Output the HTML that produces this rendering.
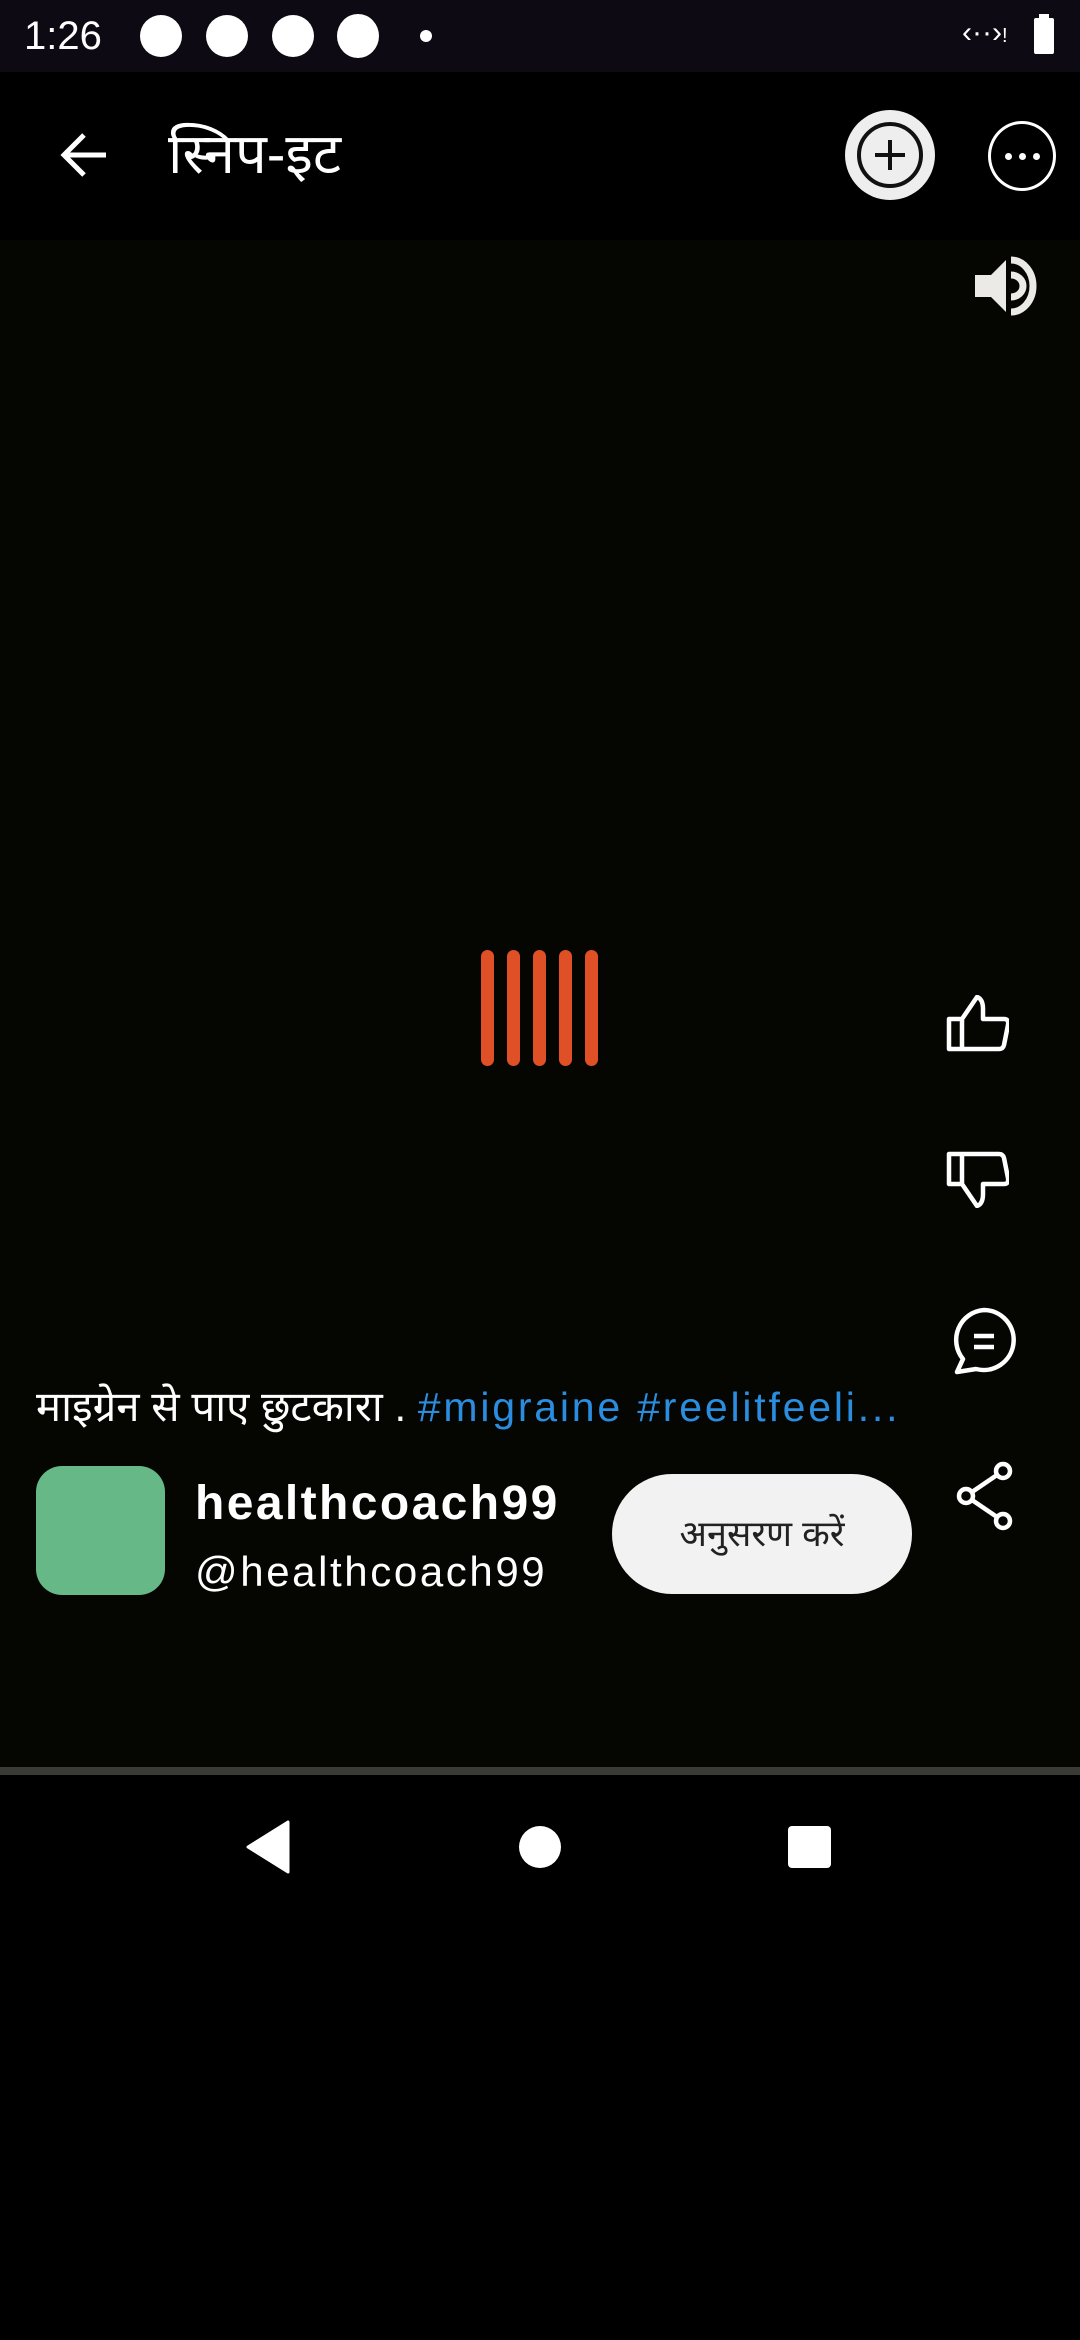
<!DOCTYPE html>
<html><head><meta charset="utf-8"><style>
*{margin:0;padding:0;box-sizing:border-box}
html,body{width:1080px;height:2340px;background:#000;overflow:hidden;font-family:"Liberation Sans","Noto Sans CJK SC",sans-serif;color:#fff;position:relative}
.abs{position:absolute}
</style></head><body>
<div class="abs" style="left:0;top:0;width:1080px;height:72px;background:#0d0a14"></div>
<div class="abs" style="left:24px;top:10px;font-size:40px;line-height:52px;color:#fff">1:26</div>
<div class="abs" style="left:140px;top:15px;width:42px;height:42px;border-radius:50%;background:#fff"></div>
<div class="abs" style="left:206px;top:15px;width:42px;height:42px;border-radius:50%;background:#fff"></div>
<div class="abs" style="left:272px;top:15px;width:42px;height:42px;border-radius:50%;background:#fff"></div>
<div class="abs" style="left:337px;top:14px;width:42px;height:44px;border-radius:50%;background:#fff"></div>
<div class="abs" style="left:420px;top:30px;width:12px;height:12px;border-radius:50%;background:#fff"></div>
<div class="abs" style="left:962px;top:16px;font-size:30px;color:#fff">‹··›<span style="font-size:20px">!</span></div>
<div class="abs" style="left:1034px;top:18px;width:20px;height:36px;background:#fff;border-radius:2px"></div>
<div class="abs" style="left:1039px;top:14px;width:10px;height:5px;background:#fff"></div>

<!-- app bar -->
<svg class="abs" style="left:56px;top:130px" width="56" height="50" viewBox="0 0 56 50"><path d="M50 25H8M28 5L8 25l20 20" stroke="#fff" stroke-width="5" fill="none"/></svg>
<div class="abs" style="left:168px;top:118px;font-size:56px;line-height:72px;font-family:'Liberation Sans','Noto Sans CJK SC','DejaVu Sans',sans-serif">स्निप-इट</div>
<div class="abs" style="left:845px;top:110px;width:90px;height:90px;border-radius:50%;background:#eee"></div>
<div class="abs" style="left:857px;top:122px;width:66px;height:66px;border-radius:50%;border:4px solid #111"></div>
<div class="abs" style="left:888px;top:140px;width:4px;height:30px;background:#111"></div>
<div class="abs" style="left:875px;top:153px;width:30px;height:4px;background:#111"></div>
<div class="abs" style="left:988px;top:121px;width:68px;height:70px;border-radius:50%;border:3px solid #fff"></div>
<div class="abs" style="left:1005px;top:153px;width:7px;height:7px;border-radius:50%;background:#fff"></div>
<div class="abs" style="left:1019px;top:153px;width:7px;height:7px;border-radius:50%;background:#fff"></div>
<div class="abs" style="left:1033px;top:153px;width:7px;height:7px;border-radius:50%;background:#fff"></div>

<!-- content -->
<div class="abs" style="left:0;top:240px;width:1080px;height:1528px;background:#050502"></div>
<svg class="abs" style="left:975px;top:255px" width="64" height="62" viewBox="0 0 64 62"><path d="M0 20h16L31 5v52L16 42H0z" fill="#eceae6"/><path d="M36 20a12 11 0 0 1 0 22" stroke="#eceae6" stroke-width="7" fill="none"/><path d="M36 5a22 26 0 0 1 0 52" stroke="#eceae6" stroke-width="7" fill="none"/></svg>

<div class="abs" style="left:481px;top:950px;width:13px;height:116px;border-radius:7px;background:#e05027"></div>
<div class="abs" style="left:507px;top:950px;width:13px;height:116px;border-radius:7px;background:#e05027"></div>
<div class="abs" style="left:533px;top:950px;width:13px;height:116px;border-radius:7px;background:#e05027"></div>
<div class="abs" style="left:559px;top:950px;width:13px;height:116px;border-radius:7px;background:#e05027"></div>
<div class="abs" style="left:585px;top:950px;width:13px;height:116px;border-radius:7px;background:#e05027"></div>

<svg class="abs" style="left:945px;top:995px" width="64" height="58" viewBox="0 0 64 58"><path d="M4 24h13v30H4zM17 54h37q4 0 5-4l4-20q1-6-4-6H38V14q0-10-6-12L17 24z" stroke="#fff" stroke-width="4.5" fill="none" stroke-linejoin="round"/></svg>
<svg class="abs" style="left:945px;top:1150px" width="64" height="58" viewBox="0 0 64 58"><path d="M4 4h13v30H4zM17 4h37q4 0 5 4l4 20q1 6-4 6H38v10q0 10-6 12L17 34z" stroke="#fff" stroke-width="4.5" fill="none" stroke-linejoin="round"/></svg>
<svg class="abs" style="left:948px;top:1305px" width="72" height="72" viewBox="0 0 72 72"><path d="M36 5a30 30 0 1 1-8 59L9 67l6-13A30 30 0 0 1 36 5z" stroke="#fff" stroke-width="4.5" fill="none" stroke-linejoin="round"/><path d="M26 31h20M26 42h20" stroke="#fff" stroke-width="4.5"/></svg>
<svg class="abs" style="left:955px;top:1460px" width="60" height="72" viewBox="0 0 60 72"><circle cx="48" cy="11" r="7" stroke="#fff" stroke-width="4.5" fill="none"/><circle cx="11" cy="36" r="7" stroke="#fff" stroke-width="4.5" fill="none"/><circle cx="48" cy="61" r="7" stroke="#fff" stroke-width="4.5" fill="none"/><path d="M42 15L17 32M17 40l25 17" stroke="#fff" stroke-width="4.5"/></svg>

<div class="abs" style="left:36px;top:1380px;font-size:42px;line-height:54px;white-space:nowrap;font-family:'Liberation Sans','Noto Sans CJK SC','DejaVu Sans',sans-serif">माइग्रेन से पाए छुटकारा . <span style="color:#2a8de0;letter-spacing:2.8px;font-size:41px">#migraine #reelitfeeli...</span></div>

<div class="abs" style="left:36px;top:1466px;width:129px;height:129px;border-radius:26px;background:#66b887"></div>
<div class="abs" style="left:195px;top:1474px;font-size:48px;font-weight:bold;line-height:60px;letter-spacing:2.4px">healthcoach99</div>
<div class="abs" style="left:195px;top:1545px;font-size:42px;line-height:54px;letter-spacing:2.6px">@healthcoach99</div>
<div class="abs" style="left:612px;top:1474px;width:300px;height:120px;border-radius:60px;background:#f2f2f2;color:#222;font-size:36px;line-height:120px;text-align:center;font-family:'Liberation Sans','Noto Sans CJK SC','DejaVu Sans',sans-serif">अनुसरण करें</div>

<div class="abs" style="left:0;top:1767px;width:1080px;height:8px;background:#3a3a36"></div>

<svg class="abs" style="left:244px;top:1820px" width="46" height="54" viewBox="0 0 46 54"><path d="M44 2v50L4 27z" fill="#fff" stroke="#fff" stroke-width="3" stroke-linejoin="round"/></svg>
<div class="abs" style="left:519px;top:1826px;width:42px;height:42px;border-radius:50%;background:#fff"></div>
<div class="abs" style="left:788px;top:1826px;width:43px;height:42px;border-radius:4px;background:#fff"></div>
</body></html>
